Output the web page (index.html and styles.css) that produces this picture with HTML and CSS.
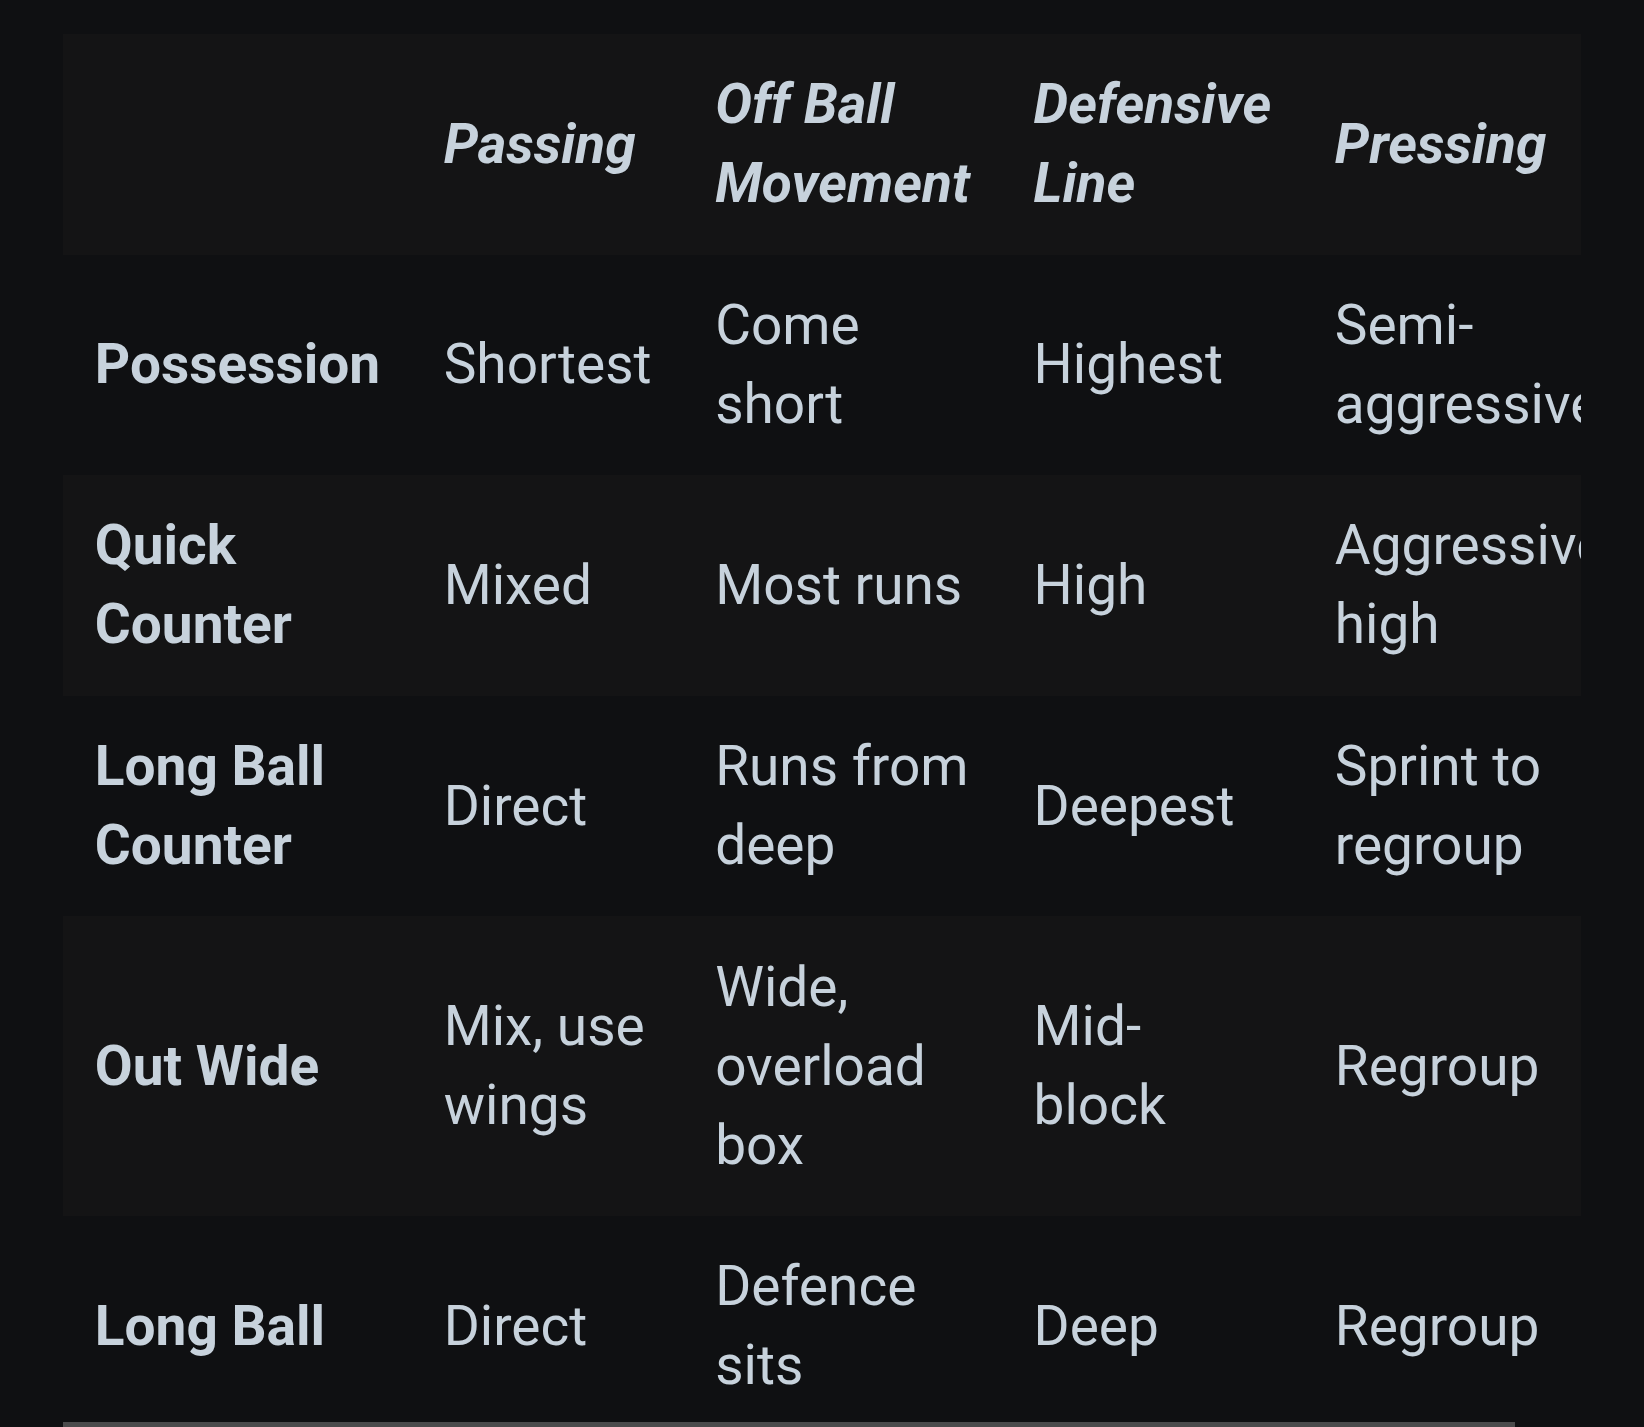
FILE: index.html
```html
<!DOCTYPE html>
<html lang="en">
<head>
<meta charset="utf-8">
<title>Tactics table</title>
<link rel="stylesheet" href="styles.css">
</head>
<body>
<main class="page">
  <div class="frame">
    <div class="scroller">
      <table class="tactics">
        <thead>
          <tr>
            <th></th>
            <th>Passing</th>
            <th>Off Ball Movement</th>
            <th>Defensive Line</th>
            <th>Pressing</th>
          </tr>
        </thead>
        <tbody>
          <tr>
            <th scope="row">Possession</th>
            <td>Shortest</td>
            <td>Come short</td>
            <td>Highest</td>
            <td>Semi-aggressive</td>
          </tr>
          <tr>
            <th scope="row">Quick Counter</th>
            <td>Mixed</td>
            <td>Most runs</td>
            <td>High</td>
            <td>Aggressive high</td>
          </tr>
          <tr>
            <th scope="row">Long Ball Counter</th>
            <td>Direct</td>
            <td>Runs from deep</td>
            <td>Deepest</td>
            <td>Sprint to regroup</td>
          </tr>
          <tr>
            <th scope="row">Out Wide</th>
            <td>Mix, use wings</td>
            <td>Wide, overload box</td>
            <td>Mid-block</td>
            <td>Regroup</td>
          </tr>
          <tr>
            <th scope="row">Long Ball</th>
            <td>Direct</td>
            <td>Defence sits</td>
            <td>Deep</td>
            <td>Regroup</td>
          </tr>
        </tbody>
      </table>
    </div>
    <div class="scroll-thumb"></div>
  </div>
</main>
</body>
</html>
```
FILE: styles.css
```css
html, body {
  margin: 0;
  padding: 0;
  background: #0f1012;
  overflow: hidden;
}

.page {
  padding: 34px 63px 0 63px;
  font-family: Roboto, "Noto Sans", sans-serif;
  color: #c7d2dc;
}

.frame {
  position: relative;
  height: 1393px;
}

.scroller {
  height: 100%;
  overflow-x: auto;
  overflow-y: hidden;
  scrollbar-width: none;
}

.scroll-thumb {
  position: absolute;
  left: 0;
  bottom: 0;
  width: 1452px;
  height: 5px;
  background: #4b4b4c;
}

.tactics {
  border-collapse: collapse;
  border-spacing: 0;
  font-size: 55px;
  line-height: 79px;
}

.tactics th,
.tactics td {
  padding: 31.3px 31.8px;
  text-align: left;
  vertical-align: middle;
}

.tactics thead th {
  font-weight: 700;
  font-style: italic;
}

.tactics tbody th {
  font-weight: 700;
  font-style: normal;
}

.tactics td {
  font-weight: 400;
}

.tactics thead tr,
.tactics tbody tr:nth-child(even) {
  background: #141415;
}
```
